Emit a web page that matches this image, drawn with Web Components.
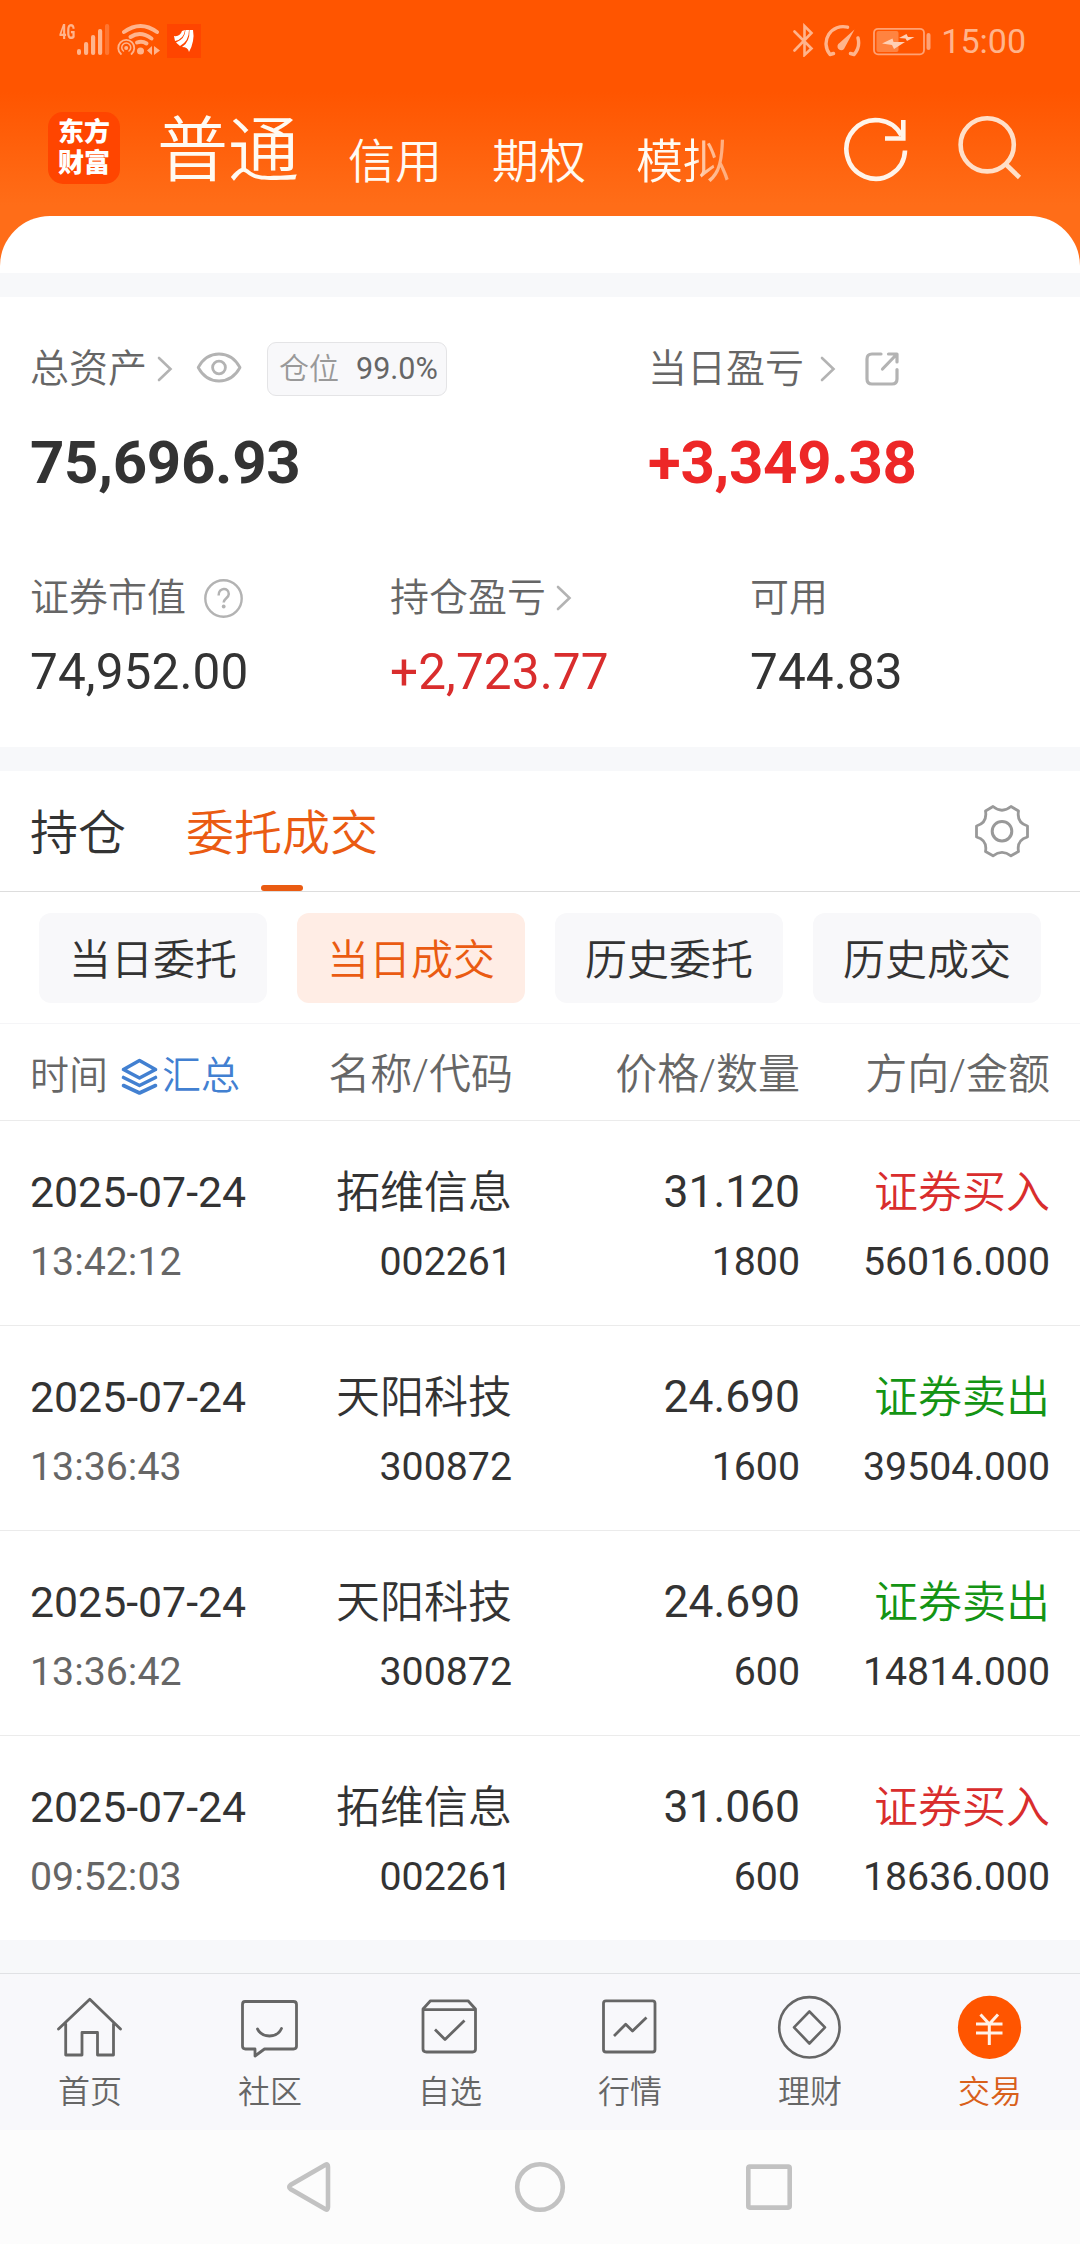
<!DOCTYPE html>
<html lang="zh-CN">
<head>
<meta charset="utf-8">
<title>交易</title>
<style>
html,body{margin:0;padding:0}
body{width:1080px;height:2244px;overflow:hidden;background:#fff;font-family:Roboto,"Noto Sans CJK SC",sans-serif;font-weight:400;color:#333}
</style>
</head>
<body>
<trade-app></trade-app>
<script>
const define = (name, html) => {
  const t = document.createElement('template');
  t.innerHTML = html;
  customElements.define(name, class extends HTMLElement {
    constructor() {
      super();
      this.attachShadow({mode: 'open'}).append(t.content.cloneNode(true));
    }
  });
};

/* Icons: [viewBox, markup] */
const ICONS = {
  signal: ['77 24 34 33', '<g fill="#ffb48c"><rect x="77" y="50" width="4" height="6" rx="2"/><rect x="84" y="43" width="4.200" height="13" rx="2"/><rect x="91" y="36" width="4.200" height="20" rx="2"/><rect x="98" y="30" width="4.200" height="26" rx="2"/><rect x="105" y="25" width="4.200" height="31" rx="2" opacity=".35"/></g>'],
  wifi: ['117 24 44 34', '<g fill="none" stroke="#ffb48c" stroke-linecap="round"><path d="M124 33 Q140.500 21 157 33" stroke-width="4"/><path d="M130.500 38 Q140.500 31.500 151.500 39.500" stroke-width="4"/><path d="M137 43.500 Q142 41.500 146.500 44.500" stroke-width="4"/><path d="M121 55 A8 8 0 1 1 131.500 55" stroke-width="1.800"/><path d="M123.500 52 A4.500 4.500 0 1 1 129 52" stroke-width="1.500"/></g><g fill="#ffb48c"><circle cx="126.200" cy="49" r="2"/><circle cx="140.500" cy="52" r="3.500"/><path d="M152 47v9l-5-4.500zM154 47v9l6-4.500z"/></g>'],
  brand: ['0 0 34 34', '<rect width="34" height="34" fill="#ff4500"/><g fill="#fff"><path d="M7 12Q13 13 15 7L18 6Q17 15 8 17Z"/><path d="M9 18.500Q18 15 18.500 6L22 6Q22 17 13 22Z"/><path d="M15 23Q23 18 22.500 6L26 6Q28 17 22 28Q21 23 15 23Z"/></g>'],
  bluetooth: ['793 23 23 34', '<path d="M795.500 31.500 L812.500 48.500 L805.500 55 V26 L812.500 33 L795.500 50.500" fill="none" stroke="#ffb48c" stroke-width="2.600" stroke-linecap="round"/>'],
  gauge: ['823 23 40 36', '<g fill="none" stroke="#ffb48c" stroke-width="3.400" stroke-linecap="round" stroke-linejoin="round"><path d="M848.500 27.200 A17 17 0 0 0 831 54.500 L834.500 53.500 M859 38 A18 18 0 0 1 855 54.500 L851.500 53.500"/></g><path d="M855.500 29.500L845 49A3.800 3.800 0 1 1 840.500 43Z" fill="#ffb48c"/>'],
  battery: ['873 27 60 29', '<rect x="875" y="28.800" width="50" height="25.500" rx="4" fill="none" stroke="#ffa274" stroke-width="1.800"/><rect x="877.500" y="31" width="22" height="21" rx="2" fill="#ff8340"/><rect x="927.500" y="33" width="4" height="17" rx="2" fill="#ffa274"/><path d="M883 43.500L893.500 38.500 894.500 42H906L895 49 893 45ZM900 38L907.500 34 909 37H915.500L908 41 906.500 38.500Z" fill="#ffd0b5"/>'],
  refresh: ['843 115 68 68', '<path d="M905 150.500 A29.300 29.300 0 1 1 901.500 135.500" fill="none" stroke="#fff4ea" stroke-width="4.600"/><path d="M903.300 120 V138.500 H885" fill="none" stroke="#fff4ea" stroke-width="4.600"/>'],
  search: ['957 114 66 67', '<g fill="none" stroke="#ffdfc8" stroke-width="4.600"><circle cx="987.200" cy="144.800" r="26.600"/><path d="M1005 163.500L1019.500 177.500"/></g>'],
  chevron: ['0 0 16 26', '<path d="M2 2L13.500 13 2 24" fill="none" stroke="#b3b3b3" stroke-width="2.600" stroke-linecap="round"/>'],
  eye: ['196 351 46 33', '<g fill="none" stroke="#b3b3b3" stroke-width="2.800"><path d="M198.200 367.500C208 349.500 230 349.500 240 367.500C230 385.500 208 385.500 198.200 367.500Z" stroke-linejoin="round"/><circle cx="219" cy="367.500" r="6.400"/></g>'],
  share: ['864 351 37 36', '<g fill="none" stroke="#b3b3b3" stroke-width="3.200" stroke-linecap="round" stroke-linejoin="round"><path d="M881 354H872Q867 354 867 359V379Q867 384 872 384H892Q897 384 897 379V369.500"/><path d="M888.500 354H897V362M896 355L882.500 369"/></g>'],
  help: ['203 578 41 41', '<circle cx="223.500" cy="598.500" r="18.200" fill="none" stroke="#b3b3b3" stroke-width="2.400"/><path d="M218.600 595.500C218.600 587 228.800 587 228.800 594C228.800 598 223.700 598.500 223.700 602.500" fill="none" stroke="#b3b3b3" stroke-width="2.500"/><circle cx="223.700" cy="606.500" r="1.900" fill="#b3b3b3"/>'],
  layers: ['121 1057 38 39', '<g fill="none" stroke="#4280d1" stroke-width="3.600" stroke-linejoin="round" stroke-linecap="round"><path d="M139.500 1060.500L155.500 1069.500 139.500 1078 123.500 1069.500Z"/><path d="M123.500 1077.500L139.500 1085.500 155.500 1077.500M123.500 1085.500L139.500 1093 155.500 1085.500"/></g>'],
  gear: ['973 803 58 57', '<g fill="none" stroke="#999" stroke-width="2.800" stroke-linejoin="round"><path d="M993 806.500Q1002 814 1011 806.500L1018.500 811Q1016.500 823 1027.500 826V837Q1016.500 840 1018.500 851.500L1011 855.800Q1002 849 993 855.800L985.500 851.500Q987.500 840 976.500 837V826Q987.500 823 985.500 811Z"/><circle cx="1002" cy="831.200" r="9.800" stroke-width="3"/></g>'],
  home: ['56 1995 68 64', '<g fill="none" stroke="#666" stroke-width="2.800" stroke-linecap="round" stroke-linejoin="round"><path d="M58.500 2029L89.800 1999.300 120.500 2029M65.700 2024V2055H82V2032.500H97.500V2055H113.500V2024"/></g>'],
  chat: ['236 1995 68 64', '<g fill="none" stroke="#666" stroke-width="2.800" stroke-linecap="round" stroke-linejoin="round"><path d="M245 2001.500H293.500Q296.500 2001.500 296.500 2004.500V2046Q296.500 2049 293.500 2049H264.500L255 2056V2049H245.500Q242.500 2049 242.500 2046V2004.500Q242.500 2001.500 245 2001.500Z"/><path d="M257.500 2029Q261 2036 269.500 2036Q278 2036 281.500 2028.500"/></g>'],
  box: ['416 1995 68 64', '<g fill="none" stroke="#666" stroke-width="2.800" stroke-linejoin="round"><path d="M423 2009L430.500 2000.800H468L475.500 2009V2049Q475.500 2052 472.500 2052H426.500Q423 2052 423 2049Z"/><path d="M423 2009.700H475.500M435 2029.500L445 2039.500 464.500 2020.500"/></g>'],
  chart: ['596 1995 68 64', '<g fill="none" stroke="#666" stroke-width="2.800" stroke-linejoin="round"><rect x="603.500" y="2000.800" width="51.500" height="51.200" rx="2.500"/><path d="M614 2036L625.700 2024.300 632.500 2031 646.500 2017.500"/></g>'],
  coin: ['776 1993 68 68', '<g fill="none" stroke="#666" stroke-width="2.600" stroke-linejoin="round"><circle cx="809.400" cy="2027.300" r="30.200"/><path d="M809.400 2011.500L825 2027.300 809.400 2043.500 794 2027.300Z"/></g>'],
  yuan: ['956 1993 68 68', '<circle cx="989.500" cy="2027.300" r="31.600" fill="#ff5500"/><g fill="none" stroke="#fff1e8" stroke-width="3"><path d="M980.500 2014.500L989.300 2024 998 2014.500M976 2024H1002.500M976 2033H1002.500M989.300 2023V2045"/></g>'],
  back: ['284 2159 50 56', '<path d="M325.500 2164.800Q328 2163.500 328 2167V2207Q328 2210.500 325.500 2209.200L290.500 2189Q288 2187 290.500 2185Z" fill="none" stroke="#c2c2c2" stroke-width="4.600"/>'],
  circle: ['512 2159 56 56', '<circle cx="540" cy="2187" r="22.800" fill="none" stroke="#c2c2c2" stroke-width="4.600"/>'],
  square: ['743 2161 52 52', '<rect x="748.300" y="2166.600" width="41.400" height="41" rx="1.500" fill="none" stroke="#c2c2c2" stroke-width="4.600"/>']
};
customElements.define('ui-icon', class extends HTMLElement {
  constructor() { super(); this.attachShadow({mode: 'open'}); }
  connectedCallback() {
    const [vb, body] = ICONS[this.getAttribute('name')];
    const [, , w, h] = vb.split(' ');
    this.shadowRoot.innerHTML = `<style>:host{display:block;flex:none;width:${w}px;height:${h}px}svg{display:block}</style><svg width="${w}" height="${h}" viewBox="${vb}">${body}</svg>`;
  }
});

define('status-bar', `<style>
:host{display:flex;height:82px;box-sizing:border-box;padding:23px 54px 0 59px;justify-content:space-between;color:#ffb48c}
div{display:flex;align-items:flex-start}
.net{font:700 20px/19px "Roboto Condensed",Roboto,sans-serif;width:18px;transform:scaleX(.75);transform-origin:0 0}
.time{font-size:34px;line-height:36px;margin:0 0 0 9px}
</style>
<div><span class="net">4G</span><ui-icon name="signal"></ui-icon><ui-icon name="wifi" style="margin-left:6px"></ui-icon><ui-icon name="brand" style="margin:1px 0 0 6px"></ui-icon></div>
<div><ui-icon name="bluetooth"></ui-icon><ui-icon name="gauge" style="margin-left:7px"></ui-icon><ui-icon name="battery" style="margin:4px 0 0 10px"></ui-icon><span class="time">15:00</span></div>`);

define('account-bar', `<style>
:host{display:flex;height:134px;align-items:center;padding:0 57px 0 48px;color:#fffaf2}
.logo{width:72px;height:72px;margin-top:-2px;border-radius:15px;background:#ff4500;color:#fff;display:grid;place-content:center;font:900 26px/31px Roboto,"Noto Sans CJK SC",sans-serif;text-align:center}
nav{display:flex;align-items:center;gap:50px;margin-left:37px;flex:1;font-size:47px;line-height:60px;font-weight:350}
nav span{padding-top:26px}
nav .on{font-size:71px;line-height:80px;padding:3px 0 0;margin-right:-1px}
.fade{-webkit-mask-image:linear-gradient(90deg,#000 62%,rgba(0,0,0,.65) 72%,rgba(0,0,0,.45));mask-image:linear-gradient(90deg,#000 62%,rgba(0,0,0,.65) 72%,rgba(0,0,0,.45))}
</style>
<div class="logo"><span>东方<br>财富</span></div>
<nav><span class="on">普通</span><span>信用</span><span>期权</span><span class="fade">模拟</span></nav>
<ui-icon name="refresh"></ui-icon><ui-icon name="search" style="margin:-3px 0 0 46px"></ui-icon>`);

define('app-header', `<style>
:host{display:block;background:linear-gradient(#ff5500 0,#ff5500 92px,#ff6d18 205px,#ff6d18)}
.lip{height:57px;background:#fff;border-radius:50px 50px 0 0}
</style><status-bar></status-bar><account-bar></account-bar><div class="lip"></div>`);

define('section-gap', `<style>:host{display:block;height:24px;background:#f7f8fa}</style>`);

define('stat-cell', `<style>
:host{display:block;color:#333}
.label{display:flex;align-items:center;height:54px;color:#666;font-size:39px;line-height:54px;font-weight:350}
.value{font-size:49.500px;line-height:60px;margin-top:17px;letter-spacing:.1px;white-space:nowrap}
:host([big]) .value{font-size:60px;font-weight:700;line-height:70px;margin-top:32px;letter-spacing:-.3px}
:host([up]) .value{color:#d92d2d}
:host([big][up]) .value{color:#ed2727}
</style><div class="label"><slot name="label"></slot></div><div class="value"><slot></slot></div>`);

define('position-tag', `<style>
:host{display:flex;box-sizing:border-box;width:180px;height:54px;border:1px solid #e4e4e6;border-radius:9px;background:#f8f8fa;align-items:center;padding-left:11px;font-size:30px;line-height:50px;color:#999}
b{font-weight:400;font-size:30.500px;color:#666;margin-left:17px}
</style><slot></slot><b><slot name="pct"></slot></b>`);

define('asset-summary', `<style>
:host{display:block;box-sizing:border-box;height:450px;padding:45px 30px 0}
.top{display:grid;grid-template-columns:618px 1fr;height:229px}
.sub{display:grid;grid-template-columns:360px 360px 1fr}
</style>
<div class="top">
<stat-cell big><span slot="label">总资产</span><ui-icon slot="label" name="chevron" style="margin-left:10px"></ui-icon><ui-icon slot="label" name="eye" style="margin:-3px 0 0 23px"></ui-icon><position-tag slot="label" style="margin-left:25px">仓位<span slot="pct">99.0%</span></position-tag>75,696.93</stat-cell>
<stat-cell big up><span slot="label">当日盈亏</span><ui-icon slot="label" name="chevron" style="margin-left:16px"></ui-icon><ui-icon slot="label" name="share" style="margin-left:28px"></ui-icon>+3,349.38</stat-cell>
</div>
<div class="sub">
<stat-cell><span slot="label">证券市值</span><ui-icon slot="label" name="help" style="margin-left:17px"></ui-icon>74,952.00</stat-cell>
<stat-cell up><span slot="label">持仓盈亏</span><ui-icon slot="label" name="chevron" style="margin-left:10px"></ui-icon>+2,723.77</stat-cell>
<stat-cell><span slot="label">可用</span>744.83</stat-cell>
</div>`);

define('section-tab', `<style>
:host{display:grid;grid-template-rows:1fr 6px;justify-items:center;height:120px;font-size:48px;line-height:60px;font-weight:350}
span{padding-top:33px}
i{width:42px;height:6px;border-radius:3px}
:host([active]){color:#ea5b12}
:host([active]) i{background:#ea5b12}
</style><span><slot></slot></span><i></i>`);

define('section-tabs', `<style>
:host{display:flex;height:120px;border-bottom:1px solid #ddd;padding:0 49px 0 30px;gap:60px}
ui-icon{margin:32px 0 0 auto}
</style><section-tab>持仓</section-tab><section-tab active>委托成交</section-tab><ui-icon name="gear"></ui-icon>`);

define('filter-chip', `<style>
:host{display:block;height:90px;border-radius:12px;background:#f8f8fa;text-align:center;font-size:42px;line-height:95px;font-weight:350}
:host([active]){background:#ffede5;color:#ea5b12}
</style><slot></slot>`);

define('filter-chips', `<style>
:host{display:grid;grid-template-columns:repeat(4,228px);gap:30px;padding:21px 39px 20px;border-bottom:1px solid #f5f5f7}
</style><filter-chip>当日委托</filter-chip><filter-chip active>当日成交</filter-chip><filter-chip>历史委托</filter-chip><filter-chip>历史成交</filter-chip>`);

define('trade-head', `<style>
:host{display:grid;grid-template-columns:260px 223px 287px 250px;padding:0 30px;height:96px;border-bottom:1px solid #ebebeb;align-items:center;text-align:right;color:#666;font-size:42px;line-height:90px;font-weight:350}
span{padding-top:5px}
div{display:flex;align-items:center;font-size:39px;padding-top:8px;line-height:88px}
em{font-style:normal;color:#4280d1;margin-left:3px}
</style><div>时间<ui-icon name="layers" style="margin-left:13px"></ui-icon><em>汇总</em></div><span>名称/代码</span><span>价格/数量</span><span>方向/金额</span>`);

define('trade-row', `<style>
:host{display:grid;grid-template-columns:260px 222px 288px 250px;grid-template-rows:68px 68px;padding:38px 30px 0;box-sizing:border-box;height:205px;border-bottom:1px solid #ebebeb;text-align:right;font-size:39.300px;line-height:70px}
:host(:last-of-type){height:204px;border-bottom-color:#fff}
.n,.s{line-height:68px;font-size:44px;font-weight:350}
.l{text-align:left}
.d{font-size:42.800px;line-height:66px}
.p{font-size:44.400px;line-height:67px}
.t{color:#666}
.s{color:#d92d2d}
:host([sell]) .s{color:#149414}
</style><span class="l d"><slot name="date"></slot></span><span class="n"><slot name="name"></slot></span><span class="p"><slot name="price"></slot></span><span class="s"><slot name="side"></slot></span>
<span class="l t"><slot name="time"></slot></span><span><slot name="code"></slot></span><span class="q"><slot name="qty"></slot></span><span><slot name="amount"></slot></span>`);

customElements.define('trade-list', class extends HTMLElement {
  constructor() {
    super();
    const rows = [
      ['13:42:12', '拓维信息', '002261', '31.120', '1800', '证券买入', '56016.000'],
      ['13:36:43', '天阳科技', '300872', '24.690', '1600', '证券卖出', '39504.000'],
      ['13:36:42', '天阳科技', '300872', '24.690', '600', '证券卖出', '14814.000'],
      ['09:52:03', '拓维信息', '002261', '31.060', '600', '证券买入', '18636.000']
    ];
    const keys = ['time', 'name', 'code', 'price', 'qty', 'side', 'amount'];
    this.attachShadow({mode: 'open'}).innerHTML = '<style>:host{display:block}</style><trade-head></trade-head>' +
      rows.map(r => `<trade-row ${r[5].includes('卖') ? 'sell' : ''}><span slot="date">2025-07-24</span>${r.map((v, i) => `<span slot="${keys[i]}">${v}</span>`).join('')}</trade-row>`).join('');
  }
});

define('tab-item', `<style>
:host{display:flex;flex-direction:column;align-items:center;color:#666;font-size:32px;line-height:40px;font-weight:350}
:host([active]){color:#d9601a}
.i{height:72px;display:grid;place-items:center;margin-top:17px}
span{margin-top:9px}
</style><div class="i"><slot name="icon"></slot></div><span><slot></slot></span>`);

define('bottom-tabs', `<style>
:host{display:grid;grid-template-columns:repeat(6,180px);height:156px;border-top:1px solid #e0e1e4;background:#f8f8fb}
</style>
<tab-item><ui-icon slot="icon" name="home"></ui-icon>首页</tab-item>
<tab-item><ui-icon slot="icon" name="chat"></ui-icon>社区</tab-item>
<tab-item><ui-icon slot="icon" name="box"></ui-icon>自选</tab-item>
<tab-item><ui-icon slot="icon" name="chart"></ui-icon>行情</tab-item>
<tab-item><ui-icon slot="icon" name="coin"></ui-icon>理财</tab-item>
<tab-item active><ui-icon slot="icon" name="yuan"></ui-icon>交易</tab-item>`);

define('system-nav', `<style>
:host{display:flex;height:114px;align-items:center;justify-content:space-between;padding:0 285px 0 284px;background:#fcfcfc}
</style><ui-icon name="back"></ui-icon><ui-icon name="circle" style="margin-left:3px"></ui-icon><ui-icon name="square"></ui-icon>`);

define('trade-app', `<style>
:host{display:flex;flex-direction:column;width:1080px;height:2244px;background:#fff}
:host>*{flex:none}
.rest{height:33px;background:#f7f8fa}
</style>
<app-header></app-header><section-gap></section-gap><asset-summary></asset-summary><section-gap></section-gap>
<section-tabs></section-tabs><filter-chips></filter-chips><trade-list></trade-list>
<div class="rest"></div><bottom-tabs></bottom-tabs><system-nav></system-nav>`);
</script>
</body>
</html>
